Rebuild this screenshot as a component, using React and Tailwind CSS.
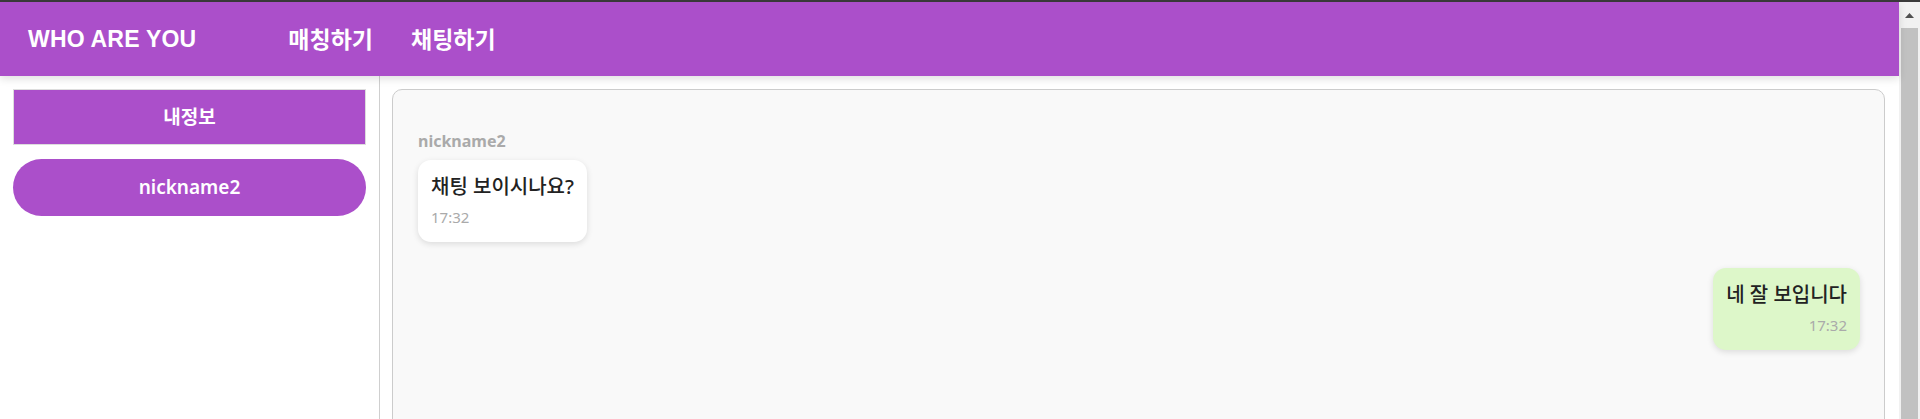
export default function App() {
  const ko = { fontFamily: '"Noto Sans", "Noto Sans CJK KR", sans-serif' };
  return (
    <div className="w-full h-[419px] overflow-hidden flex flex-col bg-white" style={ko}>
      <div className="h-[2px] w-full bg-[#3a3a3a] shrink-0" />
      <div className="flex flex-1 min-h-0">
        <div className="flex-1 flex flex-col min-w-0">
          <header className="relative z-10 h-[74px] shrink-0 bg-[#ab4fca] flex items-center pl-[28px] shadow-[0_3px_8px_rgba(0,0,0,0.12)]">
            <div
              className="text-white text-[23px] font-bold tracking-[0.2px]"
              style={{ fontFamily: '"Liberation Sans", Arial, sans-serif' }}
            >
              WHO ARE YOU
            </div>
            <nav className="flex items-center gap-[38px] ml-[92px] text-white text-[23px] font-bold">
              <span>매칭하기</span>
              <span>채팅하기</span>
            </nav>
          </header>
          <div className="flex flex-1 min-h-0">
            <aside className="w-[380px] shrink-0 border-r border-[#cfcfcf] px-[13px] pt-[13px] flex flex-col">
              <button className="h-[56px] w-full border border-[#dddddd] bg-[#ab4fca] text-white text-[19px] font-bold">
                내정보
              </button>
              <button className="mt-[14px] h-[57px] w-full rounded-full bg-[#ab4fca] text-white text-[19px] font-semibold">
                nickname2
              </button>
            </aside>
            <main className="flex-1 min-w-0 pl-[12px] pr-[14px] pt-[13px] overflow-hidden">
              <div className="h-[420px] rounded-[10px] border border-[#cccccc] bg-[#f9f9f9] pl-[25px] pr-[24px] pt-[41px] flex flex-col">
                <div className="text-[16px] leading-[20px] font-bold text-[#aaaaaa]">nickname2</div>
                <div className="mt-[9px] self-start bg-white rounded-[13px] shadow-[0_2px_6px_rgba(0,0,0,0.12)] px-[13px] pt-[14px] pb-[15px]">
                  <div className="text-[20px] leading-[26px] font-medium text-[#222222]">채팅 보이시나요?</div>
                  <div className="mt-[7px] text-[15px] leading-[20px] text-[#aaaaaa]">17:32</div>
                </div>
                <div className="mt-[26px] self-end bg-[#ddf7c9] rounded-[13px] shadow-[0_2px_6px_rgba(0,0,0,0.12)] px-[13px] pt-[14px] pb-[15px] text-right">
                  <div className="text-[20px] leading-[26px] font-medium text-[#222222]">네 잘 보입니다</div>
                  <div className="mt-[7px] text-[15px] leading-[20px] text-[#aaaaaa]">17:32</div>
                </div>
              </div>
            </main>
          </div>
        </div>
        <div className="w-[21px] shrink-0 bg-[#f1f1f1] flex flex-col items-center">
          <div className="h-[26px] w-full flex items-center justify-center">
            <svg width="9" height="5" viewBox="0 0 9 5">
              <path d="M4.5 0 L9 5 L0 5 Z" fill="#505050" />
            </svg>
          </div>
          <div className="w-[17px] flex-1 bg-[#c1c1c1]" />
        </div>
      </div>
    </div>
  );
}
